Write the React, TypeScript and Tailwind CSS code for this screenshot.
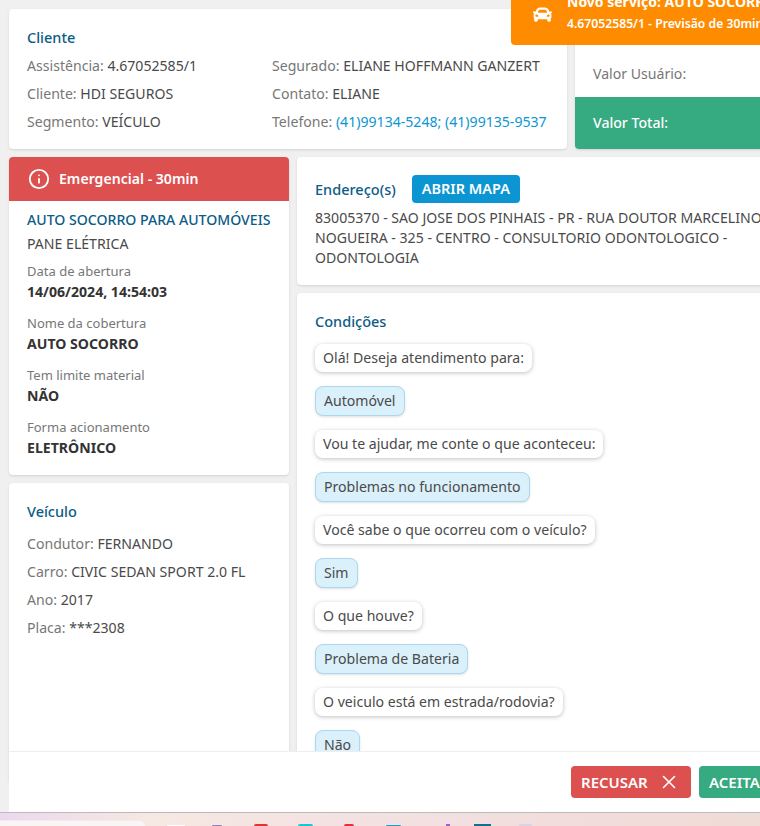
import { X, Info } from "lucide-react";
import { FaCar } from "react-icons/fa";

const cliente = [
  ["Assistência:", "4.67052585/1"],
  ["Cliente:", "HDI SEGUROS"],
  ["Segmento:", "VEÍCULO"],
];

const detalhes = [
  ["Data de abertura", "14/06/2024, 14:54:03"],
  ["Nome da cobertura", "AUTO SOCORRO"],
  ["Tem limite material", "NÃO"],
  ["Forma acionamento", "ELETRÔNICO"],
];

const veiculo = [
  ["Condutor:", "FERNANDO"],
  ["Carro:", "CIVIC SEDAN SPORT 2.0 FL"],
  ["Ano:", "2017"],
  ["Placa:", "***2308"],
];

const conversa: [string, boolean][] = [
  ["Olá! Deseja atendimento para:", false],
  ["Automóvel", true],
  ["Vou te ajudar, me conte o que aconteceu:", false],
  ["Problemas no funcionamento", true],
  ["Você sabe o que ocorreu com o veículo?", false],
  ["Sim", true],
  ["O que houve?", false],
  ["Problema de Bateria", true],
  ["O veiculo está em estrada/rodovia?", false],
  ["Não", true],
];

function Field({ label, value }: { label: string; value: string }) {
  return (
    <p className="h-7 leading-7 whitespace-nowrap">
      <span className="text-[#777]">{label}</span> <span className="text-[#4a4a4a]">{value}</span>
    </p>
  );
}

function Title({ children }: { children: React.ReactNode }) {
  return <h3 className="text-[14.5px] leading-5 font-medium text-[#0b5c86]">{children}</h3>;
}

export default function App() {
  return (
    <div className="relative h-[826px] w-[760px] overflow-hidden bg-[#f0f0f0] font-['Noto_Sans',sans-serif] text-[14.1px] text-[#4a4a4a]">
      <div className="flex flex-col gap-2 pt-[9px] pl-[9px]">
        <div className="flex gap-2">
          <section className="h-[140px] w-[558px] shrink-0 rounded bg-white px-[18px] pt-[18px] shadow-sm">
            <Title>Cliente</Title>
            <div className="mt-[5px] flex">
              <div className="w-[245px]">
                {cliente.map(([l, v]) => (
                  <Field key={l} label={l} value={v} />
                ))}
              </div>
              <div>
                <Field label="Segurado:" value="ELIANE HOFFMANN GANZERT" />
                <Field label="Contato:" value="ELIANE" />
                <p className="h-7 leading-7 whitespace-nowrap">
                  <span className="text-[#777]">Telefone:</span>{" "}
                  <span className="text-[#0b96d3]">(41)99134-5248; (41)99135-9537</span>
                </p>
              </div>
            </div>
          </section>
          <section className="flex h-[140px] w-[300px] shrink-0 flex-col justify-end overflow-hidden rounded bg-white shadow-sm">
            <p className="h-[46px] px-[18px] leading-[46px] text-[#777]">Valor Usuário:</p>
            <p className="h-[52px] bg-[#36aa80] px-[18px] leading-[52px] font-medium text-white">Valor Total:</p>
          </section>
        </div>
        <div className="flex gap-2">
          <div className="flex w-[280px] shrink-0 flex-col gap-2">
            <section className="h-[318px] overflow-hidden rounded bg-white shadow-sm">
              <div className="flex h-11 items-center gap-[9px] bg-[#dd5050] px-[19px] font-semibold text-white">
                <Info size={22} strokeWidth={2} />
                <span>Emergencial - 30min</span>
              </div>
              <div className="px-[18px] pt-[7px]">
                <p className="leading-6 font-medium whitespace-nowrap text-[#0b5c86]">AUTO SOCORRO PARA AUTOMÓVEIS</p>
                <p className="leading-6">PANE ELÉTRICA</p>
                {detalhes.map(([l, v]) => (
                  <div key={l} className="mt-[6px] h-[46px]">
                    <p className="mb-[2px] text-[13px] leading-[18px] text-[#777]">{l}</p>
                    <p className="leading-5 font-bold text-[#333]">{v}</p>
                  </div>
                ))}
              </div>
            </section>
            <section className="h-[300px] rounded bg-white px-[18px] pt-[18px] shadow-sm">
              <Title>Veículo</Title>
              <div className="mt-[9px]">
                {veiculo.map(([l, v]) => (
                  <Field key={l} label={l} value={v} />
                ))}
              </div>
            </section>
          </div>
          <div className="flex w-[500px] shrink-0 flex-col gap-2">
            <section className="h-[128px] rounded bg-white pt-[18px] pl-[18px] shadow-sm">
              <div className="flex items-center gap-4">
                <Title>Endereço(s)</Title>
                <button className="h-7 rounded bg-[#0b96d3] px-[10px] text-[14.5px] font-semibold text-white">ABRIR MAPA</button>
              </div>
              <p className="mt-[5px] leading-5">
                83005370 - SAO JOSE DOS PINHAIS - PR - RUA DOUTOR MARCELINO NOGUEIRA - 325 - CENTRO - CONSULTORIO ODONTOLOGICO - ODONTOLOGIA
              </p>
            </section>
            <section className="h-[500px] rounded bg-white px-[18px] pt-[18px] shadow-sm">
              <Title>Condições</Title>
              <div className="mt-[13px] flex flex-col items-start gap-[14px]">
                {conversa.map(([t, user]) => (
                  <span
                    key={t}
                    className={
                      user
                        ? "h-[30px] rounded-lg border border-[#aad8ee] bg-[#daf0fa] px-2 leading-7 shadow-sm"
                        : "h-[28px] rounded-lg bg-white px-2 leading-7 shadow-[0_1px_4px_rgba(0,0,0,0.25)]"
                    }
                  >
                    {t}
                  </span>
                ))}
              </div>
            </section>
          </div>
        </div>
      </div>

      <div className="absolute top-[-19px] left-[511px] flex h-[64px] w-[300px] items-center gap-[15px] rounded-b bg-[#ff8c00] pl-[22px] text-white">
        <FaCar size={19} className="mt-[3px]" />
        <div className="font-bold whitespace-nowrap">
          <p className="text-[14px] leading-[22px]">Novo serviço: AUTO SOCORRO</p>
          <p className="text-[12.2px] leading-[22px] font-semibold">4.67052585/1 - Previsão de 30min</p>
        </div>
      </div>

      <div className="absolute top-[751px] left-[9px] flex h-[61px] w-[820px] gap-2 border-t border-[#eee] bg-white pt-[14px] pl-[562px]">
        <button className="flex h-8 w-[120px] shrink-0 items-center gap-[10px] rounded bg-[#dd5050] pl-[10px] text-[15px] font-semibold text-white">
          RECUSAR <X size={22} strokeWidth={1.75} />
        </button>
        <button className="h-8 w-[120px] shrink-0 rounded bg-[#36aa80] pl-[10px] text-left text-[15px] font-semibold text-white">ACEITAR</button>
      </div>

      <div className="absolute top-[812px] left-0 flex h-[14px] w-full items-end overflow-hidden border-t border-[#bbb] bg-[linear-gradient(90deg,#ecd8ee,#f6e8e2_20%,#f4e2e2_45%,#f2dcdc_75%,#f0dcd6)]">
        <div className="h-[6px] w-[145px] shrink-0 rounded-tr-2xl border-t border-[#eee] bg-[#faf4f4]" />
        <div className="ml-[22px] h-[1px] w-[18px] shrink-0 rounded-t bg-white" />
        <div className="ml-[27px] h-[1px] w-[10px] shrink-0 rounded-t bg-[#8f7fc8]" />
        <div className="ml-[32px] h-[2px] w-[14px] shrink-0 rounded-t-full bg-[#e0352f]" />
        <div className="ml-[30px] h-[2px] w-[15px] shrink-0 rounded-t-full bg-[#1cc4d8]" />
        <div className="ml-[31px] h-[2px] w-[10px] shrink-0 rounded-t-full bg-[#e0303a]" />
        <div className="ml-[32px] h-[1px] w-[15px] shrink-0 rounded-t-full bg-[#1a9fd0]" />
        <div className="ml-[45px] h-[2px] w-[4px] shrink-0 bg-[#a060c8]" />
        <div className="ml-[24px] h-[2px] w-[17px] shrink-0 bg-[#107090]" />
        <div className="ml-[28px] h-[2px] w-[13px] shrink-0 rounded-t-full bg-[#d8d4e4]" />
      </div>
    </div>
  );
}
